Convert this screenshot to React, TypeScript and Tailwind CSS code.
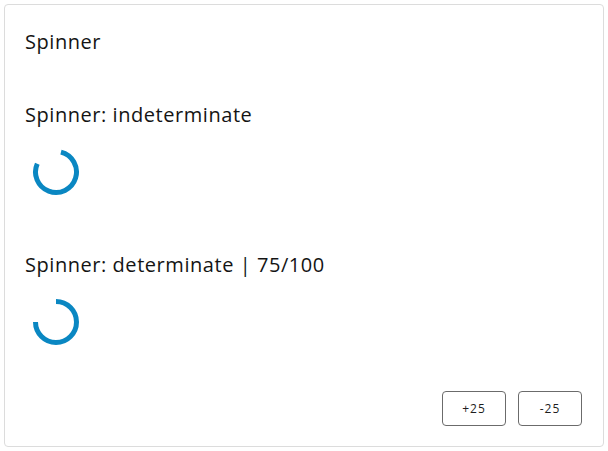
function Spinner({ from, to }: { from: number; to: number }) {
  const r = 20.5;
  const c = 24;
  const pt = (deg: number) => {
    const a = ((deg - 90) * Math.PI) / 180;
    return [c + r * Math.cos(a), c + r * Math.sin(a)];
  };
  const [x1, y1] = pt(from);
  const [x2, y2] = pt(to);
  const large = to - from > 180 ? 1 : 0;
  return (
    <svg width="48" height="48" viewBox="0 0 48 48" className="block">
      <path
        d={`M ${x1} ${y1} A ${r} ${r} 0 ${large} 1 ${x2} ${y2}`}
        fill="none"
        stroke="#0a87c2"
        strokeWidth="5"
      />
    </svg>
  );
}

export default function App() {
  return (
    <div className="w-[608px] h-[451px] bg-white p-1" style={{ fontFamily: '"Open Sans", sans-serif' }}>
      <div className="h-[443px] border border-[#dcdcdc] rounded-[4px] px-5 pt-[23px] pb-5 flex flex-col text-[#141414]">
        <h1 className="text-[20px] leading-[28px] font-medium tracking-[0.55px]">Spinner</h1>

        <h2 className="mt-[45px] text-[20px] leading-[28px] font-medium tracking-[0.55px]">Spinner: indeterminate</h2>
        <div className="mt-[19px] ml-[7px]">
          <Spinner from={14} to={294} />
        </div>

        <h2 className="mt-[55px] text-[20px] leading-[28px] font-medium tracking-[0.55px]">Spinner: determinate | 75/100</h2>
        <div className="mt-[19px] ml-[7px]">
          <Spinner from={0} to={270} />
        </div>

        <div className="mt-auto flex justify-end gap-3 pr-[1px]">
          <button className="w-16 h-[35px] border border-[#6b6b6b] rounded-[4px] text-[12px] tracking-[1px] text-[#1e1e1e] bg-white">
            +25
          </button>
          <button className="w-16 h-[35px] border border-[#6b6b6b] rounded-[4px] text-[12px] tracking-[1px] text-[#1e1e1e] bg-white">
            -25
          </button>
        </div>
      </div>
    </div>
  );
}
